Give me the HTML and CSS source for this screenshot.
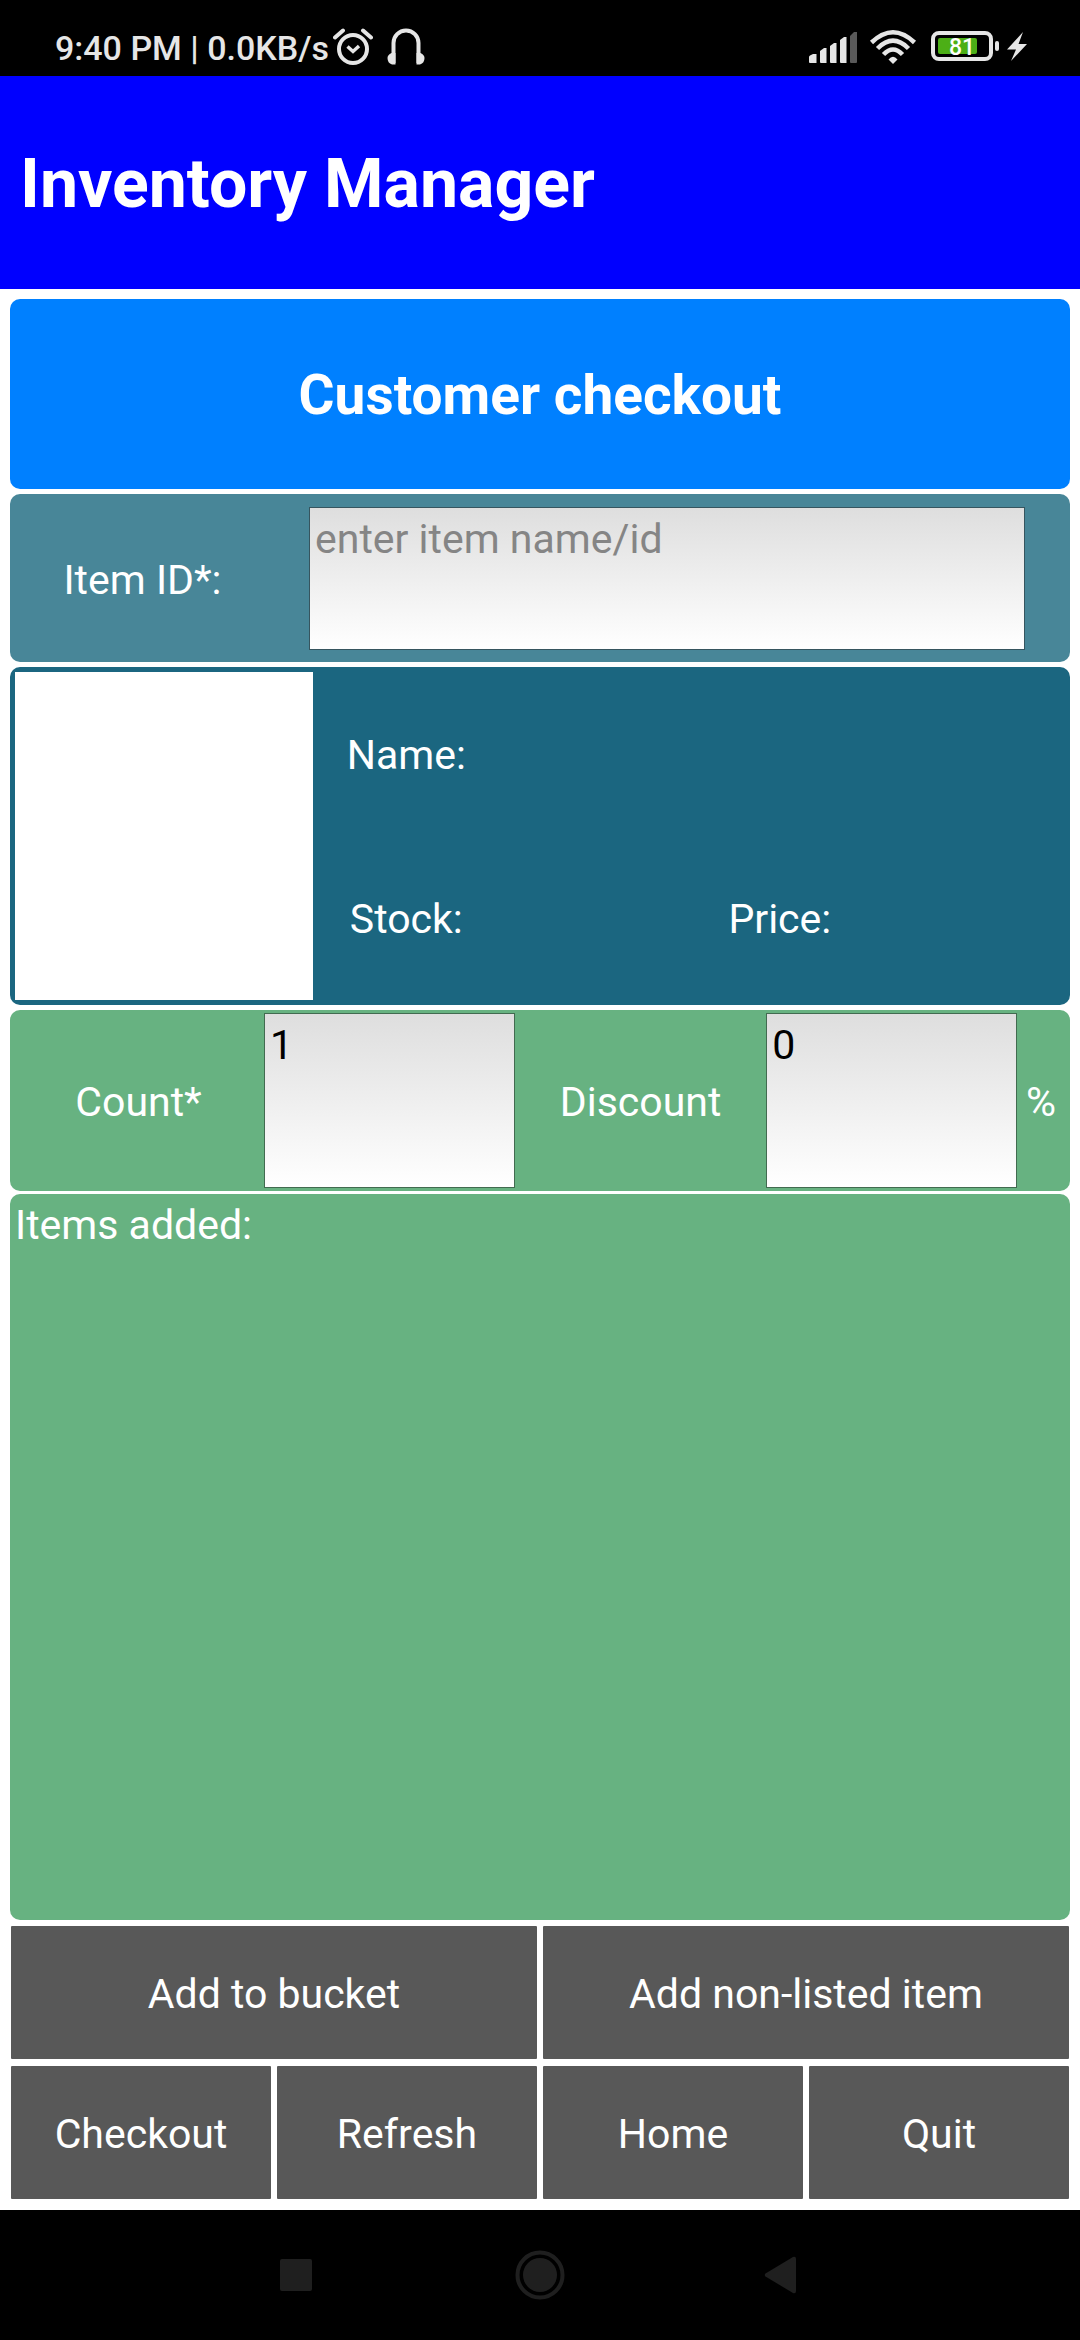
FILE: index.html
```html
<!DOCTYPE html>
<html lang="en">
<head>
<meta charset="utf-8">
<meta name="viewport" content="width=device-width, initial-scale=1">
<title>Inventory Manager</title>
<link rel="stylesheet" href="styles.css">
</head>
<body>
<div class="status">
  <span class="status-text">9:40 PM | 0.0KB/s</span>
  <svg class="icon-alarm" width="40" height="40" viewBox="0 0 40 40" fill="none" stroke="#e6e6e6" aria-label="Alarm">
    <circle cx="20" cy="22" r="14" stroke-width="4"/>
    <path d="M14.500 19.500l5.500 5 6-5.500" stroke-width="3.400"/>
    <path d="M2 10.500L10 3.500M38 10.500L30 3.500" stroke-width="4" stroke-linecap="round"/>
  </svg>
  <svg class="icon-headset" width="38" height="40" viewBox="0 0 38 40" aria-label="Headphones">
    <path d="M6.500 36V16a12.500 12.500 0 0 1 25 0V36" fill="none" stroke="#e6e6e6" stroke-width="4"/>
    <path d="M8.500 26H4.500Q.5 28 .5 31Q.5 36 5 37.500H8.500zM29.500 26H33.500Q37.500 28 37.500 31Q37.500 36 33 37.500H29.500z" fill="#e6e6e6"/>
  </svg>
  <div class="status-right">
    <svg width="48" height="40" viewBox="0 0 48 40" fill="#e6e6e6" aria-label="Signal">
      <path d="M0 35V30Q0 29 1 28.500L4 27H7.500V36H1Q0 36 0 35z"/>
      <path d="M11 35V24L15 21H17.500V36H12Q11 36 11 35z"/>
      <path d="M21 35V19L25 16H27.500V36H22Q21 36 21 35z"/>
      <path d="M31 35V13L35 10H37.500V36H32Q31 36 31 35z"/>
      <path d="M41 35V9L45 5H48V35Q48 36 47 36H42Q41 36 41 35z" fill="#595959"/>
    </svg>
    <svg class="icon-wifi" width="48" height="40" viewBox="0 0 48 40" fill="none" stroke="#e6e6e6" stroke-width="4.500" aria-label="Wi-Fi">
      <path d="M2.500 15.500Q24-5 45.500 15.500"/>
      <path d="M8.500 21.500Q24 6 39.500 21.500"/>
      <path d="M14.500 27.500Q24 17.500 33.500 27.500"/>
      <path d="M19.500 32.500Q24 27 28.500 32.500L24 37z" fill="#e6e6e6" stroke="none"/>
    </svg>
    <svg class="icon-battery" width="70" height="40" viewBox="0 0 70 40" aria-label="Battery">
      <rect x="2" y="6" width="58" height="26" rx="6" fill="none" stroke="#e6e6e6" stroke-width="4"/>
      <rect x="64" y="14" width="4" height="10" rx="2" fill="#e6e6e6"/>
      <rect x="7" y="11" width="39" height="16" rx="2" fill="#4caf16"/>
      <text x="31" y="28" text-anchor="middle" class="battery-level">81</text>
    </svg>
    <svg width="20" height="40" viewBox="0 0 20 40" fill="#e6e6e6" aria-label="Charging">
      <path d="M16 5L0 22.500H9L4 34L20 17H11.500z"/>
    </svg>
  </div>
</div>

<header class="app-bar"><h1>Inventory Manager</h1></header>

<main class="main">
  <h2 class="panel banner">Customer checkout</h2>

  <section class="panel lookup">
    <label for="item">Item ID*:</label>
    <textarea id="item" class="field" placeholder="enter item name/id"></textarea>
  </section>

  <section class="panel details">
    <div class="photo"></div>
    <div class="facts">
      <span>Name:</span>
      <span class="row-end"></span>
      <span>Stock:</span>
      <span></span>
      <span>Price:</span>
      <span></span>
    </div>
  </section>

  <div class="basket">
    <section class="panel amounts">
      <label for="count">Count*</label>
      <textarea id="count" class="field">1</textarea>
      <label for="discount">Discount</label>
      <textarea id="discount" class="field">0</textarea>
      <span>%</span>
    </section>
    <section class="panel added">Items added:</section>
  </div>

  <div class="actions">
    <button type="button" class="wide">Add to bucket</button>
    <button type="button" class="wide">Add non-listed item</button>
    <button type="button">Checkout</button>
    <button type="button">Refresh</button>
    <button type="button">Home</button>
    <button type="button">Quit</button>
  </div>
</main>

<nav class="system-nav">
  <button type="button" aria-label="Recent apps">
    <svg width="50" height="50" viewBox="0 0 50 50"><rect x="10" y="9" width="32" height="32" rx="2"/></svg>
  </button>
  <button type="button" aria-label="Home screen">
    <svg width="50" height="50" viewBox="0 0 50 50"><circle cx="25" cy="25" r="17"/><circle cx="25" cy="25" r="22.500" fill="none" stroke="#1f1f1f" stroke-width="4"/></svg>
  </button>
  <button type="button" aria-label="Back">
    <svg width="50" height="50" viewBox="0 0 50 50"><path d="M5.500 23.500L33 7Q36 6 36 9V41Q36 44 33 43L5.500 26.500Q4 25 5.500 23.500z"/></svg>
  </button>
</nav>
</body>
</html>
```

FILE: styles.css
```css
* {
  box-sizing: border-box;
}

body {
  margin: 0;
  min-height: 100vh;
  display: flex;
  flex-direction: column;
  background: #fff;
  color: #fff;
  font: 41px/48px Roboto, sans-serif;
}

h1,
h2 {
  margin: 0;
  font-weight: 700;
}

svg {
  display: block;
  flex: none;
}

button {
  border: 0;
  padding: 0;
  color: inherit;
  font: inherit;
}

/* Status bar */
.status {
  display: flex;
  align-items: center;
  min-height: 76px;
  padding: 18px 53px 0 55px;
  background: #000;
  color: #e6e6e6;
}

.status-text {
  padding-top: 2px;
  font-size: 34px;
  line-height: 40px;
  font-weight: 500;
}

.icon-alarm {
  margin-left: 4px;
}

.icon-headset {
  margin-left: 14px;
}

.status-right {
  display: flex;
  margin-left: auto;
}

.icon-wifi {
  margin-left: 12px;
}

.icon-battery {
  margin: 0 6px 0 14px;
}

.battery-level {
  fill: #fff;
  font-size: 23px;
  font-weight: 500;
}

/* Title bar */
.app-bar {
  padding: 68px 20px 65px;
  background: #00f;
}

.app-bar h1 {
  font-size: 68px;
  line-height: 80px;
}

/* Content */
.main {
  flex: 1;
  display: flex;
  flex-direction: column;
  gap: 5px;
  padding: 10px 10px 11px;
}

.panel {
  border-radius: 10px;
}

.banner {
  padding: 64px 10px 62px;
  background: #0080ff;
  font-size: 55px;
  line-height: 64px;
  text-align: center;
}

.field {
  display: block;
  width: 100%;
  margin: 0;
  padding: 7px 5px;
  border: 1px solid #36555f;
  border-radius: 0;
  background: linear-gradient(#dedede, #fff);
  color: #000;
  font: inherit;
  resize: none;
  overflow: hidden;
}

.field::placeholder {
  color: #858585;
  opacity: 1;
}

label,
.facts span,
.amounts span {
  padding-top: 2px;
}

.lookup {
  display: grid;
  grid-template-columns: 265px 1fr;
  align-items: center;
  padding: 13px 45px 12px 0;
  background: #488698;
  text-align: center;
}

.lookup .field {
  width: auto;
  height: 143px;
  margin-left: 34px;
  text-align: left;
}

.details {
  display: grid;
  grid-template-columns: 40fr 101fr;
  padding: 5px;
  background: #1b6680;
}

.photo {
  min-height: 328px;
  background: #fff;
}

.facts {
  display: grid;
  grid-template-columns: repeat(4, 1fr);
  grid-template-rows: 1fr 1fr;
  align-items: center;
  padding-right: 5px;
  text-align: center;
}

.facts .row-end {
  grid-column: span 3;
}

.basket {
  flex: 1;
  display: flex;
  flex-direction: column;
  gap: 3px;
}

.amounts,
.added {
  background: #67b281;
}

.amounts {
  display: grid;
  grid-template-columns: 21fr 21fr 21fr 21fr 4fr;
  align-items: center;
  padding: 3px 5px 3px 3px;
  text-align: center;
}

.amounts .field {
  height: 175px;
  border-color: #426b50;
}

.added {
  flex: 1;
  padding: 7px 5px;
}

.actions {
  display: grid;
  grid-template-columns: repeat(4, 1fr);
  gap: 7px 6px;
  padding: 1px 1px 0;
}

.actions button {
  min-height: 133px;
  padding-top: 2px;
  border-radius: 1px;
  background: #585858;
}

.actions .wide {
  grid-column: span 2;
}

/* System navigation */
.system-nav {
  display: flex;
  align-items: center;
  justify-content: space-between;
  min-height: 130px;
  padding: 0 25%;
  background: #000;
}

.system-nav button {
  background: none;
}

.system-nav svg {
  fill: #1f1f1f;
}
```
